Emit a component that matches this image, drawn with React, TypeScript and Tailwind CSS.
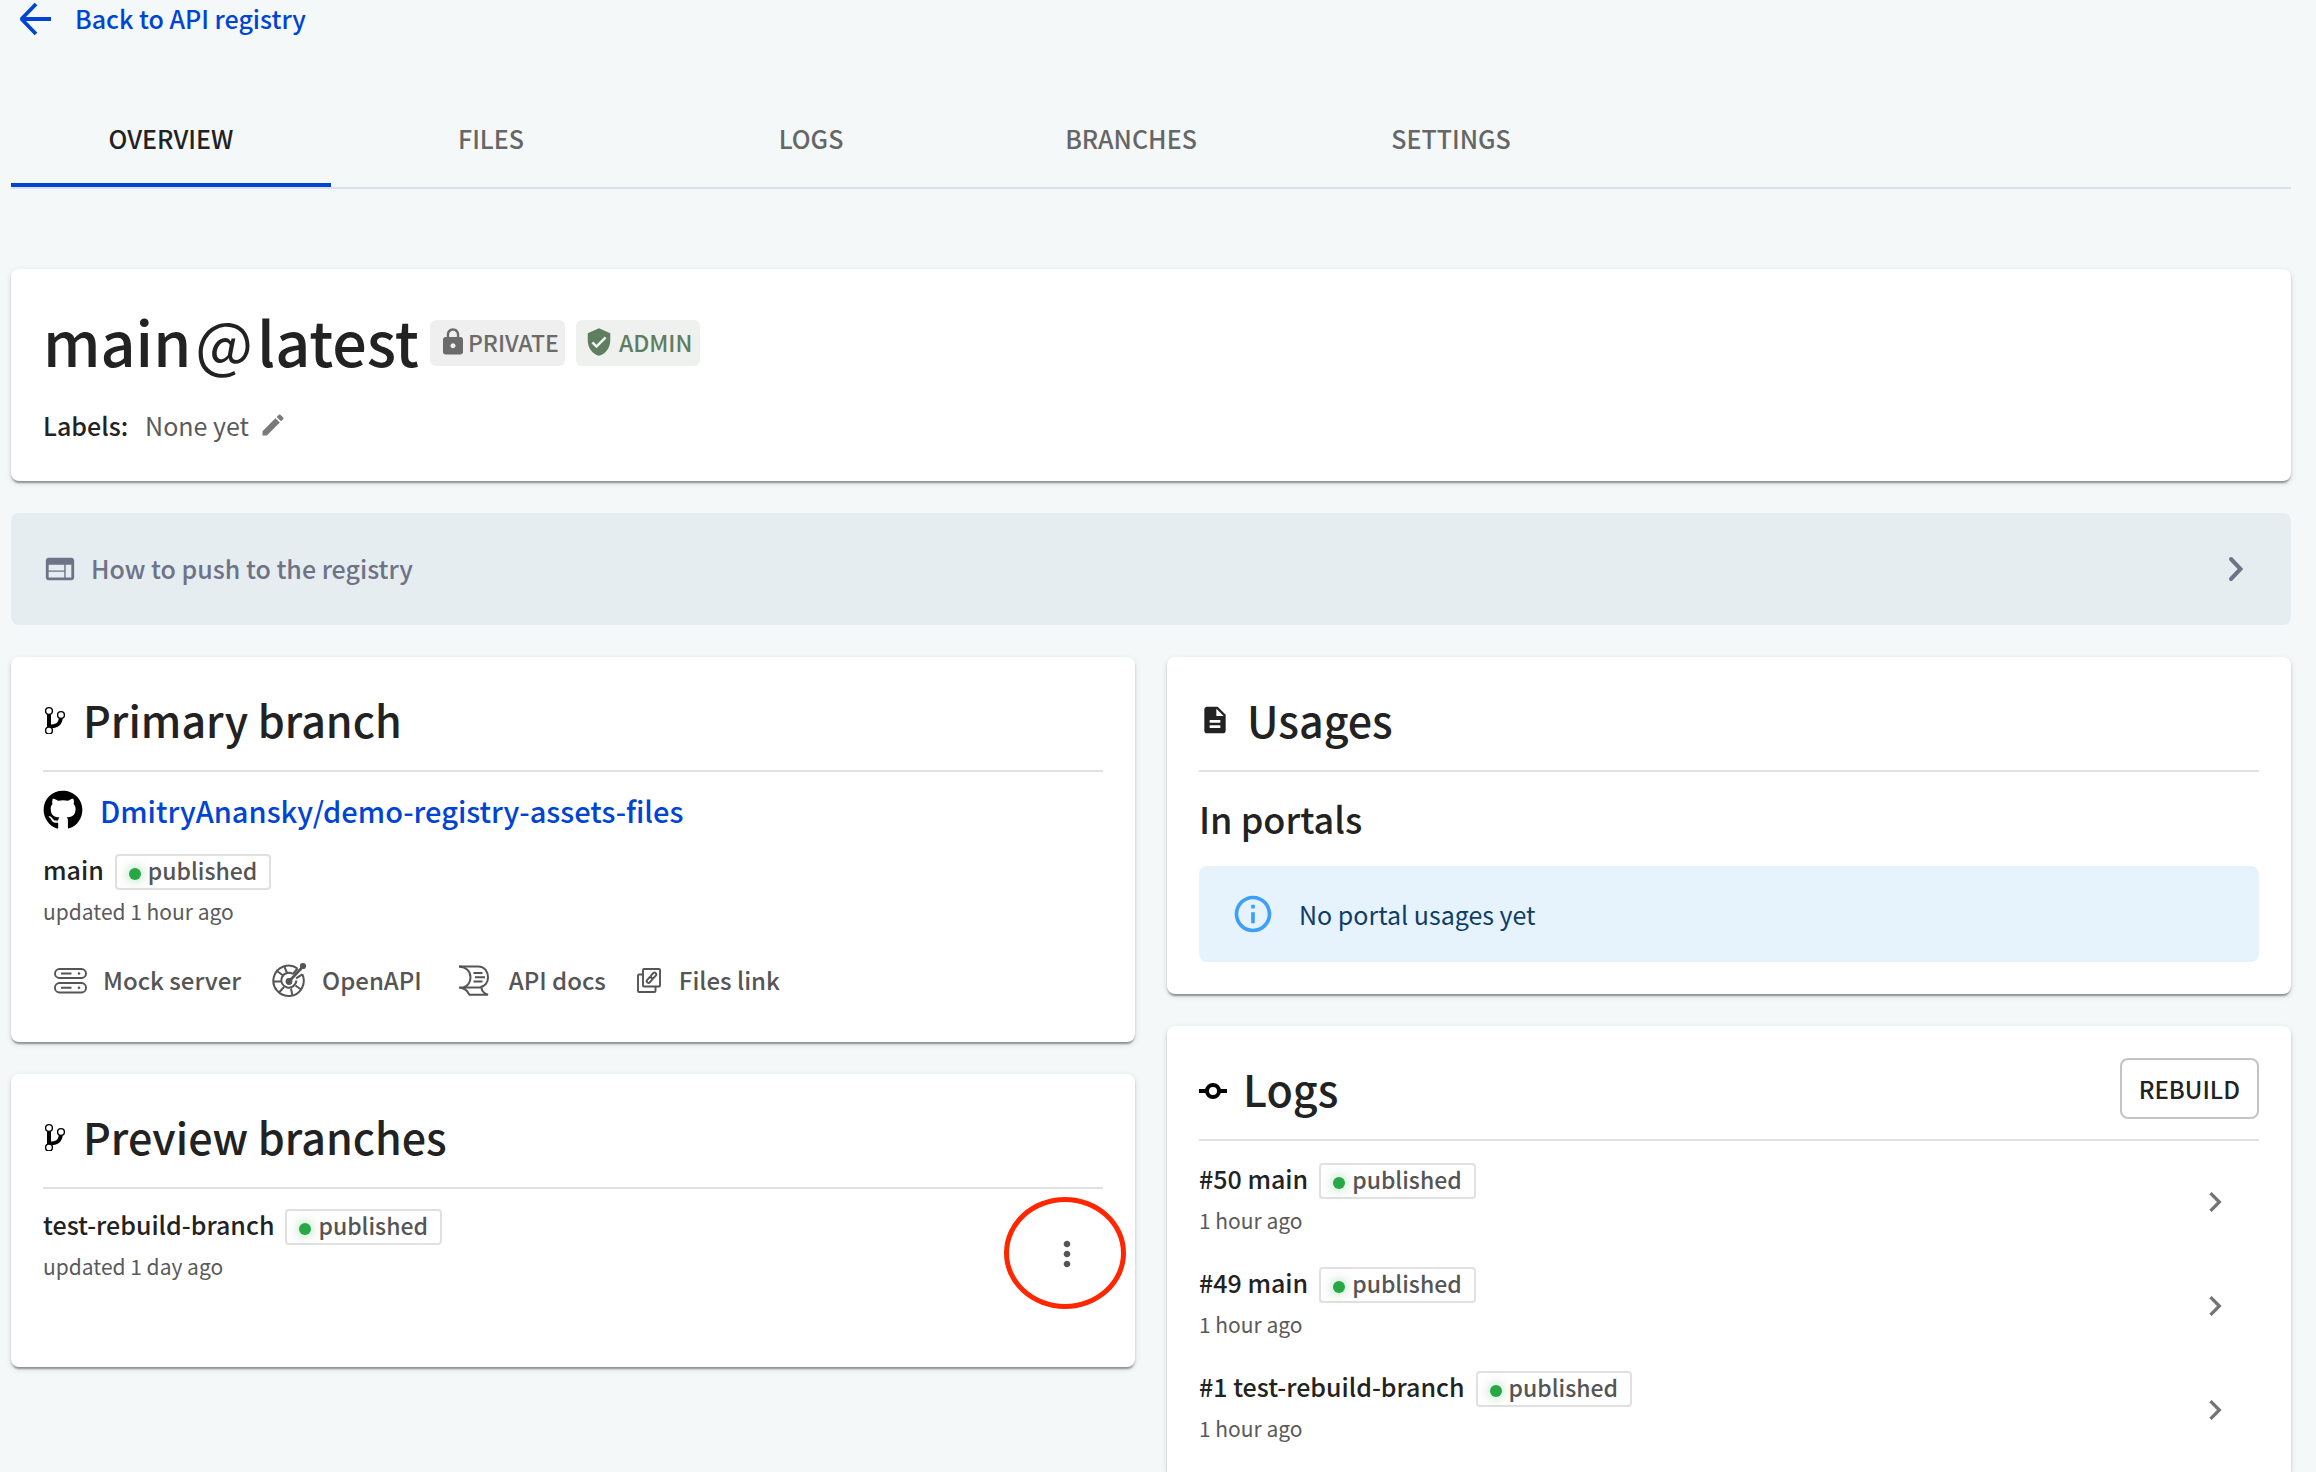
import type { ReactNode } from "react";
import { FaGithub } from "react-icons/fa";
import {
  MdChevronRight,
  MdDescription,
  MdEdit,
  MdLock,
  MdMoreVert,
  MdOutlineInfo,
  MdVerifiedUser,
  MdWeb,
} from "react-icons/md";

const tabs = ["OVERVIEW", "FILES", "LOGS", "BRANCHES", "SETTINGS"];

const logs = [
  { id: 50, branch: "main", time: "1 hour ago" },
  { id: 49, branch: "main", time: "1 hour ago" },
  { id: 1, branch: "test-rebuild-branch", time: "1 hour ago" },
];

function BackArrowIcon() {
  return (
    <svg viewBox="0 0 36 36" className="h-9 w-9" fill="none" stroke="currentColor" strokeWidth="3.8">
      <path d="M19 4L4.500 19l14.500 15M4 19h30" strokeLinejoin="bevel" />
    </svg>
  );
}

function BranchIcon() {
  return (
    <svg viewBox="0 0 24 28" className="h-7 w-6 shrink-0" fill="none" stroke="#000">
      <path d="M6 6v17" strokeWidth="4" />
      <path d="M6 20.500c7 0 11.500-1.500 11.800-9" strokeWidth="4" />
      <circle cx="6" cy="5" r="3.400" fill="#fff" strokeWidth="1.400" />
      <circle cx="18" cy="9" r="3.400" fill="#fff" strokeWidth="1.400" />
      <circle cx="6" cy="24.500" r="3.400" fill="#fff" strokeWidth="1.400" />
    </svg>
  );
}

function CommitIcon() {
  return (
    <svg viewBox="0 0 28 28" className="h-7 w-7 shrink-0" fill="none" stroke="#000" strokeWidth="4">
      <circle cx="14" cy="16" r="6" />
      <path d="M0 16h8M20 16h8" />
    </svg>
  );
}

function ServerIcon() {
  return (
    <svg viewBox="0 0 36 36" className="h-9 w-9" fill="none" stroke="currentColor" strokeWidth="1.900">
      <rect x="2" y="7" width="31" height="9" rx="4.500" />
      <rect x="2" y="21" width="31" height="9.500" rx="4.500" />
      <path d="M8 11.500h10.500M8 25.700h10.500" />
      <circle cx="26" cy="11.500" r="1.300" fill="currentColor" stroke="none" />
      <circle cx="26" cy="25.700" r="1.300" fill="currentColor" stroke="none" />
    </svg>
  );
}

function OpenApiIcon() {
  return (
    <svg viewBox="0 0 36 36" className="h-9 w-9" fill="none" stroke="currentColor" strokeWidth="2">
      <path d="M25.500 6.500A15.200 15.200 0 1 0 30.300 12.300" />
      <path d="M21 12A7.500 7.500 0 1 0 24.300 18.500" />
      <path d="M25.500 6.500L21 12M30.300 12.300l-6.200 4" />
      <path d="M12 14L5.500 9.500M15.500 12L12.500 5M9.500 19.500H2M12 25L7 30.500M19 26.500l1.500 7.500M23.500 23.500l5.500 4" />
      <path d="M17 19.500L31 4.500" strokeWidth="2.600" />
      <circle cx="31" cy="4" r="3.100" fill="currentColor" stroke="none" />
      <circle cx="17" cy="19.500" r="3.400" fill="currentColor" stroke="none" />
    </svg>
  );
}

function DocsIcon() {
  return (
    <svg viewBox="0 0 42 36" className="h-9 w-[42px]" fill="none" stroke="currentColor" strokeWidth="2">
      <path d="M6 4.500h19c7 0 10 5.500 10 11 0 5-3 9-7.500 9.500" />
      <path d="M6 4.500c7 .500 11.500 4.500 11.500 11 0 5-3 9-7 9.700" />
      <path d="M6 25.500h22.500c0 3 1.500 5.500 6.500 7.300H16.500c-2-4.500-4.500-6.800-10.500-7.300z" />
      <path d="M20.500 11h9M22 15.300h10M20.500 19.500h9" />
    </svg>
  );
}

function FilesIcon() {
  return (
    <svg viewBox="0 0 28 36" className="h-9 w-7" fill="none" stroke="currentColor" strokeWidth="1.900">
      <rect x="6" y="7" width="17" height="17.500" rx="1" />
      <path d="M6 12.500H1.500a1 1 0 0 0-1 1V29a1 1 0 0 0 1 1H17a1 1 0 0 0 1-1v-4.500" transform="translate(.5 0)" />
      <rect x="-3.200" y="-1.800" width="6.400" height="3.600" rx="1.800" transform="translate(16.500 13.500) rotate(-47)" />
      <rect x="-3.200" y="-1.800" width="6.400" height="3.600" rx="1.800" transform="translate(12.500 18) rotate(-47)" />
    </svg>
  );
}

function Card({ className = "", children }: { className?: string; children: ReactNode }) {
  return (
    <section
      className={`rounded-lg bg-white px-8 pt-8 shadow-[0_4px_2px_-2px_rgba(0,0,0,0.2),0_2px_2px_0_rgba(0,0,0,0.2),0_2px_6px_0_rgba(0,0,0,0.12)] ${className}`}
    >
      {children}
    </section>
  );
}

function CardHeader({ icon, title, action }: { icon: ReactNode; title: string; action?: ReactNode }) {
  return (
    <header className="flex items-center justify-between border-b-2 border-[#e0e0e0] pb-5">
      <div className="flex items-center gap-4">
        {icon}
        <h2 className="text-[43px] leading-[61px] font-medium">{title}</h2>
      </div>
      {action}
    </header>
  );
}

function BranchStatus({ name, time }: { name: string; time: string }) {
  return (
    <div>
      <div className="flex items-baseline gap-[11px]">
        <span className="text-[25px] leading-[28px] font-medium">{name}</span>
        <span className="flex items-baseline gap-[7px] rounded border-2 border-[#e0e0e0] px-3 pb-1 text-[23px] leading-[28px] font-medium text-[#555]">
          <span className="h-3 w-3 rounded-full bg-[#28a745] shadow-[0_0_12px_rgba(40,167,69,0.5)]" />
          published
        </span>
      </div>
      <p className="text-[21px] leading-[42px] text-[#5a5a5a]">{time}</p>
    </div>
  );
}

function ActionLink({ icon, label }: { icon: ReactNode; label: string }) {
  return (
    <a href="#" className="flex items-center gap-3.5 text-2xl leading-9 font-medium text-[#555]">
      {icon}
      {label}
    </a>
  );
}

export default function App() {
  return (
    <div className="flex min-h-screen flex-col bg-[#f4f8f9] pr-[25px] pl-[11px] font-['Noto_Sans_CJK_SC',sans-serif] text-[#222]">
      <a href="#" className="flex items-center gap-[22px] self-start pl-1.5 text-[25px] leading-[34px] font-medium text-[#0044d4]">
        <BackArrowIcon />
        Back to API registry
      </a>

      <nav className="mt-[57px] flex border-b-2 border-[#dae1ee]">
        {tabs.map((tab, index) => (
          <button
            key={tab}
            type="button"
            className={`w-80 border-b-4 py-6 text-[25px] leading-[42px] font-medium ${
              index === 0 ? "border-[#0044d4] text-[#222]" : "border-transparent text-[#666]"
            }`}
          >
            {tab}
          </button>
        ))}
      </nav>

      <Card className="mt-20 pb-9">
        <div className="flex items-center gap-[11px]">
          <h1 className="text-[61px] leading-[80px] font-medium">
            main<span className="mx-1 font-normal">@</span>latest
          </h1>
          <span className="mt-1 flex items-center rounded-md bg-[#efefef] pr-1.5 pb-0.5 pl-2 text-[23px] leading-[44px] font-medium text-[#6b6b6b]">
            <MdLock className="size-[30px]" />
            PRIVATE
          </span>
          <span className="mt-1 flex items-center gap-[5px] rounded-md bg-[#eff1ef] px-2 pb-0.5 text-[23px] leading-[44px] font-medium text-[#5f7d5f]">
            <MdVerifiedUser className="size-[30px]" />
            ADMIN
          </span>
        </div>
        <div className="mt-6 flex items-center text-[25px] leading-10">
          <span className="mr-[17px] font-medium">Labels:</span>
          <span className="mr-2.5 text-[#5a5a5a]">None yet</span>
          <button type="button" aria-label="Edit labels" className="text-[#7a7a7a]">
            <MdEdit className="size-7" />
          </button>
        </div>
      </Card>

      <button
        type="button"
        className="mt-8 flex items-center gap-3.5 rounded-lg bg-[#e6edf0] py-9 pr-9 pl-8 text-left text-[25px] leading-[38px] font-medium text-[#6e7387]"
      >
        <MdWeb className="size-[34px]" />
        <span className="flex-1 pb-0.5">How to push to the registry</span>
        <svg viewBox="0 0 38 38" className="size-[38px]" fill="none" stroke="currentColor" strokeWidth="4">
          <path d="M14 9l9.500 10L14 29" strokeLinecap="round" />
        </svg>
      </button>

      <main className="mt-8 grid flex-1 grid-cols-2 gap-8">
        <div className="flex flex-col gap-8">
          <Card className="pb-11">
            <CardHeader icon={<BranchIcon />} title="Primary branch" />
            <a href="#" className="mt-[18px] mb-6 flex items-center gap-[17px] text-[29px] leading-10 font-medium text-[#0044d4]">
              <FaGithub className="size-10 text-black" />
              DmitryAnansky/demo-registry-assets-files
            </a>
            <BranchStatus name="main" time="updated 1 hour ago" />
            <div className="mt-[30px] flex gap-[31px] pl-[10px]">
              <ActionLink icon={<ServerIcon />} label="Mock server" />
              <ActionLink icon={<OpenApiIcon />} label="OpenAPI" />
              <ActionLink icon={<DocsIcon />} label="API docs" />
              <ActionLink icon={<FilesIcon />} label="Files link" />
            </div>
          </Card>

          <Card className="pb-[68px]">
            <CardHeader icon={<BranchIcon />} title="Preview branches" />
            <div className="mt-5 flex min-h-[90px] justify-between">
              <BranchStatus name="test-rebuild-branch" time="updated 1 day ago" />
              <button type="button" aria-label="Branch actions" className="relative mr-4 self-center text-[#555]">
                <MdMoreVert className="size-10" />
                <span className="pointer-events-none absolute -top-[37px] -left-[43px] h-28 w-[122px] rounded-[50%] border-5 border-[#ff2600]" />
              </button>
            </div>
          </Card>
        </div>

        <div className="flex flex-col gap-8">
          <Card className="pb-8">
            <CardHeader icon={<MdDescription className="size-8 shrink-0" />} title="Usages" />
            <h3 className="mt-4 mb-[18px] text-[36px] leading-[60px] font-medium">In portals</h3>
            <div className="flex items-center gap-6 rounded-lg bg-[#e6f3fd] px-8 py-6 text-[25px] leading-[48px] text-[#0f3d66]">
              <MdOutlineInfo className="size-11 text-[#3d9ff7]" />
              No portal usages yet
            </div>
          </Card>

          <Card className="flex-1 rounded-b-none">
            <CardHeader
              icon={<CommitIcon />}
              title="Logs"
              action={
                <button
                  type="button"
                  className="rounded-lg border-2 border-[#c4c4c4] px-[17px] text-2xl leading-[57px] font-medium"
                >
                  REBUILD
                </button>
              }
            />
            <ul className="pt-2">
              {logs.map((log) => (
                <li key={log.id}>
                  <a href="#" className="flex items-center justify-between pt-3.5 pr-6 pb-3">
                    <BranchStatus name={`#${log.id} ${log.branch}`} time={log.time} />
                    <MdChevronRight className="size-10 text-[#757575]" />
                  </a>
                </li>
              ))}
            </ul>
          </Card>
        </div>
      </main>
    </div>
  );
}
